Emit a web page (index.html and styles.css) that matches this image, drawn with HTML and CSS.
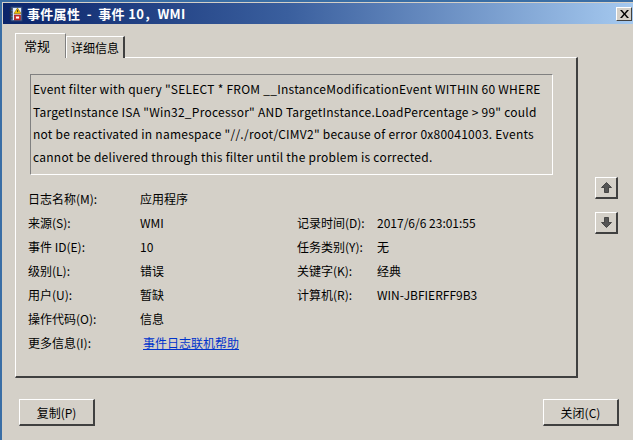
FILE: index.html
```html
<!DOCTYPE html>
<html>
<head>
<meta charset="utf-8">
<link rel="stylesheet" href="styles.css">
</head>
<body>
<div class="window">
  <div class="titlebar">
    <svg class="appicon" width="16" height="16" viewBox="0 0 16 16">
      <rect x="3" y="1" width="11" height="14" fill="#5a7fb8" stroke="#2a3f6a" stroke-width="1"/>
      <rect x="5" y="2" width="8" height="12" fill="#e8eef8"/>
      <g stroke="#333" stroke-width="1">
        <line x1="1.5" y1="3" x2="4.5" y2="3"/>
        <line x1="1.5" y1="6" x2="4.5" y2="6"/>
        <line x1="1.5" y1="9" x2="4.5" y2="9"/>
        <line x1="1.5" y1="12" x2="4.5" y2="12"/>
      </g>
      <path d="M9.5 2 L13 7.5 L6 7.5 Z" fill="#f6c400" stroke="#8a6a00" stroke-width="0.6"/>
      <rect x="9.2" y="3.8" width="0.9" height="2.3" fill="#222"/>
      <rect x="6.5" y="9" width="6" height="5" fill="#d83030" stroke="#7a1010" stroke-width="0.6"/>
      <rect x="8" y="10.5" width="3" height="2" fill="#fff"/>
    </svg>
    <span class="title">事件属性  -  事件 10，WMI</span>
    <span class="spacer"></span>
    <span class="closebtn">
      <svg width="9" height="8" viewBox="0 0 9 8"><path d="M0 0h2l2.5 3 2.5-3h2l-3.5 4 3.5 4h-2l-2.5-3-2.5 3h-2l3.5-4z" fill="#000"/></svg>
    </span>
  </div>
  <div class="client">
    <div class="tabs">
      <div class="tab active">常规</div>
      <div class="tab">详细信息</div>
    </div>
    <div class="mainrow">
      <div class="panel">
        <div class="textbox">Event filter with query "SELECT * FROM __InstanceModificationEvent WITHIN 60 WHERE TargetInstance ISA "Win32_Processor" AND TargetInstance.LoadPercentage &gt; 99" could not be reactivated in namespace "//./root/CIMV2" because of error 0x80041003. Events cannot be delivered through this filter until the problem is corrected.</div>
        <div class="fields">
          <div class="lbl">日志名称(M):</div><div class="val">应用程序</div><div class="lbl2"></div><div class="val2"></div>
          <div class="lbl">来源(S):</div><div class="val">WMI</div><div class="lbl2">记录时间(D):</div><div class="val2">2017/6/6 23:01:55</div>
          <div class="lbl">事件 ID(E):</div><div class="val">10</div><div class="lbl2">任务类别(Y):</div><div class="val2">无</div>
          <div class="lbl">级别(L):</div><div class="val">错误</div><div class="lbl2">关键字(K):</div><div class="val2">经典</div>
          <div class="lbl">用户(U):</div><div class="val">暂缺</div><div class="lbl2">计算机(R):</div><div class="val2">WIN-JBFIERFF9B3</div>
          <div class="lbl">操作代码(O):</div><div class="val">信息</div><div class="lbl2"></div><div class="val2"></div>
          <div class="lbl">更多信息(I):</div><div class="val"><a class="link" href="#">事件日志联机帮助</a></div><div class="lbl2"></div><div class="val2"></div>
        </div>
      </div>
      <div class="side">
        <div class="arrowbtn">
          <svg width="11" height="11" viewBox="0 0 11 11"><path d="M5.5 0.5 L10.5 5.5 L7.5 5.5 L7.5 10.5 L3.5 10.5 L3.5 5.5 L0.5 5.5 Z" fill="#555" stroke="#333" stroke-width="0.8"/></svg>
        </div>
        <div class="arrowbtn">
          <svg width="11" height="11" viewBox="0 0 11 11"><path d="M5.5 10.5 L10.5 5.5 L7.5 5.5 L7.5 0.5 L3.5 0.5 L3.5 5.5 L0.5 5.5 Z" fill="#555" stroke="#333" stroke-width="0.8"/></svg>
        </div>
      </div>
    </div>
    <div class="buttons">
      <div class="btn">复制(P)</div>
      <div class="btn">关闭(C)</div>
    </div>
  </div>
</div>
</body>
</html>
```
FILE: styles.css
```css
html, body {
  margin: 0;
  padding: 0;
  background: #3a6ea5;
  width: 633px;
  height: 440px;
  overflow: hidden;
}
body {
  font-family: "Noto Sans CJK SC", "Noto Sans", sans-serif;
  font-size: 12px;
  color: #000;
  padding: 2px 0 0 2px;
  box-sizing: border-box;
}
.window {
  width: 640px;
  height: 450px;
  background: #d4d0c8;
  border-top: 1px solid #d4d0c8;
  border-left: 1px solid #d4d0c8;
  box-sizing: border-box;
}
.titlebar {
  height: 21px;
  display: flex;
  align-items: center;
  background: linear-gradient(to right, #0a246a 0%, #3a5f9e 45%, #a6caf0 100%);
  padding-left: 5px;
  padding-right: 3px;
  margin-right: 7px;
}
.appicon {
  flex: none;
  margin-right: 3px;
}
.title {
  color: #fff;
  font-weight: bold;
  font-size: 13px;
  letter-spacing: 0.3px;
  white-space: pre;
}
.spacer { flex: 1; }
.closebtn {
  width: 16px;
  height: 14px;
  box-sizing: border-box;
  background: #d4d0c8;
  border-top: 1px solid #fff;
  border-left: 1px solid #fff;
  border-right: 1px solid #404040;
  border-bottom: 1px solid #404040;
  display: flex;
  align-items: center;
  justify-content: center;
}
.client {
  padding: 10px 0 0 12px;
  display: flex;
  flex-direction: column;
}
.tabs {
  display: flex;
  align-items: flex-end;
  height: 24px;
  position: relative;
  z-index: 1;
  margin-bottom: -1px;
}
.tab {
  height: 22px;
  box-sizing: border-box;
  border-top: 1px solid #fff;
  border-left: 1px solid #fff;
  border-right: 2px solid #404040;
  background: #d4d0c8;
  padding: 2px 0 0 4px;
  line-height: 18px;
  font-size: 12px;
  width: 59px;
  white-space: nowrap;
}
.tab.active {
  height: 25px;
  width: 51px;
  padding: 3px 0 0 8px;
  border-right: 1px solid #808080;
  font-size: 13px;
}
.mainrow {
  display: flex;
  align-items: flex-start;
}
.panel {
  width: 563px;
  height: 321px;
  box-sizing: border-box;
  border-top: 1px solid #fff;
  border-left: 1px solid #fff;
  border-right: 2px solid #404040;
  border-bottom: 2px solid #404040;
  padding: 16px 0 0 12px;
}
.textbox {
  width: 523px;
  height: 101px;
  box-sizing: border-box;
  margin-left: 2px;
  border-top: 1px solid #808080;
  border-left: 1px solid #808080;
  border-right: 1px solid #fff;
  border-bottom: 1px solid #fff;
  padding: 3px 4px 0 2px;
  line-height: 22.5px;
  font-size: 12px;
  letter-spacing: 0.25px;
}
.fields {
  margin-top: 11px;
  display: grid;
  grid-template-columns: 112px 157px 80px 1fr;
  grid-auto-rows: 24px;
  align-items: center;
}
.link {
  color: #0033cc;
  text-decoration: underline;
  margin-left: 3px;
}
.side {
  padding: 120px 0 0 17px;
  display: flex;
  flex-direction: column;
  gap: 13px;
}
.arrowbtn {
  width: 23px;
  height: 22px;
  box-sizing: border-box;
  border-top: 1px solid #fff;
  border-left: 1px solid #fff;
  border-right: 2px solid #404040;
  border-bottom: 2px solid #404040;
  background: #d4d0c8;
  display: flex;
  align-items: center;
  justify-content: center;
}
.buttons {
  display: flex;
  justify-content: space-between;
  margin-top: 21px;
  padding-left: 4px;
  width: 600px;
}
.btn {
  width: 76px;
  height: 27px;
  box-sizing: border-box;
  border-top: 1px solid #fff;
  border-left: 1px solid #fff;
  border-right: 2px solid #404040;
  border-bottom: 2px solid #404040;
  display: flex;
  align-items: center;
  justify-content: center;
  font-size: 12px;
}
```
